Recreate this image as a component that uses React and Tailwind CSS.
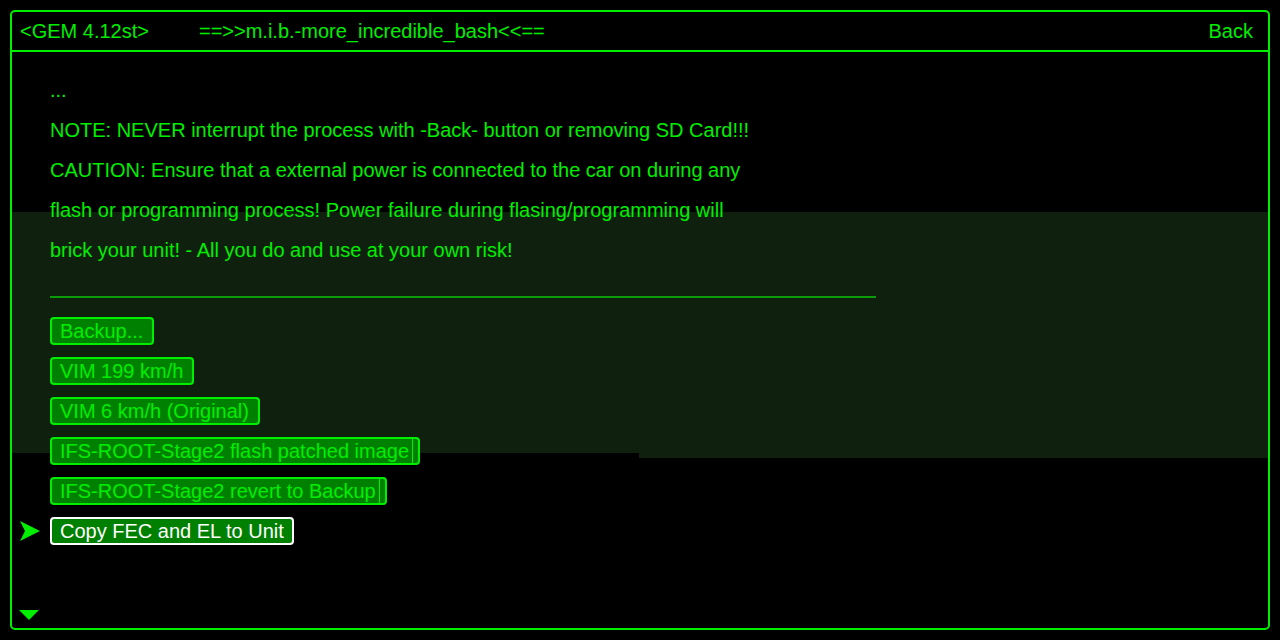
const font = { fontFamily: '"Liberation Sans", Arial, sans-serif' };

function Btn({ label, clipped, selected }) {
  return (
    <div
      className={`flex h-[28px] items-center rounded-[4px] border-2 bg-[#008000] pl-[8px] text-[20px] leading-none ${
        selected ? "border-white text-white pr-[8px]" : "border-[#00ee00] text-[#00ee00]"
      } ${clipped ? "pr-[5px]" : selected ? "" : "pr-[9px]"}`}
    >
      <span>{label}</span>
      {clipped && <span className="ml-[3px] h-[24px] w-[1px] bg-[#00ee00]" />}
    </div>
  );
}

export default function App() {
  const buttons = [
    { label: "Backup..." },
    { label: "VIM 199 km/h" },
    { label: "VIM 6 km/h (Original)" },
    { label: "IFS-ROOT-Stage2 flash patched image", clipped: true },
    { label: "IFS-ROOT-Stage2 revert to Backup", clipped: true },
    { label: "Copy FEC and EL to Unit", selected: true },
  ];
  return (
    <div className="h-[640px] w-[1280px] bg-black p-[10px]" style={font}>
      <div className="relative flex h-[620px] w-[1260px] flex-col rounded-[5px] border-2 border-[#00ee00]">
        {/* ghost panel */}
        <div className="absolute left-0 top-[200px] h-[241px] w-[1256px] bg-[#10200f]" />
        <div className="absolute left-[627px] top-[200px] h-[246px] w-[629px] bg-[#10200f]" />

        <header className="relative flex h-[40px] items-center border-b-2 border-[#00ee00] pl-[8px] pr-[15px] text-[20px] text-[#00ee00]">
          <span>&lt;GEM 4.12st&gt;</span>
          <span className="ml-[50px]">==&gt;&gt;m.i.b.-more_incredible_bash&lt;&lt;==</span>
          <span className="ml-auto">Back</span>
        </header>

        <main className="relative flex flex-1 flex-col pl-[38px] pt-[18px] text-[20px] text-[#00ee00]">
          <div className="leading-[40px]">
            <p>...</p>
            <p>NOTE: NEVER interrupt the process with -Back- button or removing SD Card!!!</p>
            <p>CAUTION: Ensure that a external power is connected to the car on during any</p>
            <p>flash or programming process! Power failure during flasing/programming will</p>
            <p>brick your unit! - All you do and use at your own risk!</p>
          </div>
          <div className="mt-[26px] h-[2px] w-[826px] bg-[#0a9a0a]" />
          <div className="mt-[19px] flex flex-col items-start gap-[12px]">
            {buttons.map((b) => (
              <div key={b.label} className="relative">
                {b.selected && (
                  <svg className="absolute left-[-30px] top-[4px]" width="20" height="20" viewBox="0 0 20 20">
                    <polygon points="0,0 20,10 0,20 5,10" fill="#00ee00" />
                  </svg>
                )}
                <Btn {...b} />
              </div>
            ))}
          </div>
          <svg className="absolute left-[7px] bottom-[8px]" width="20" height="10" viewBox="0 0 20 10">
            <polygon points="0,0 20,0 10,10" fill="#00ee00" />
          </svg>
        </main>
      </div>
    </div>
  );
}
